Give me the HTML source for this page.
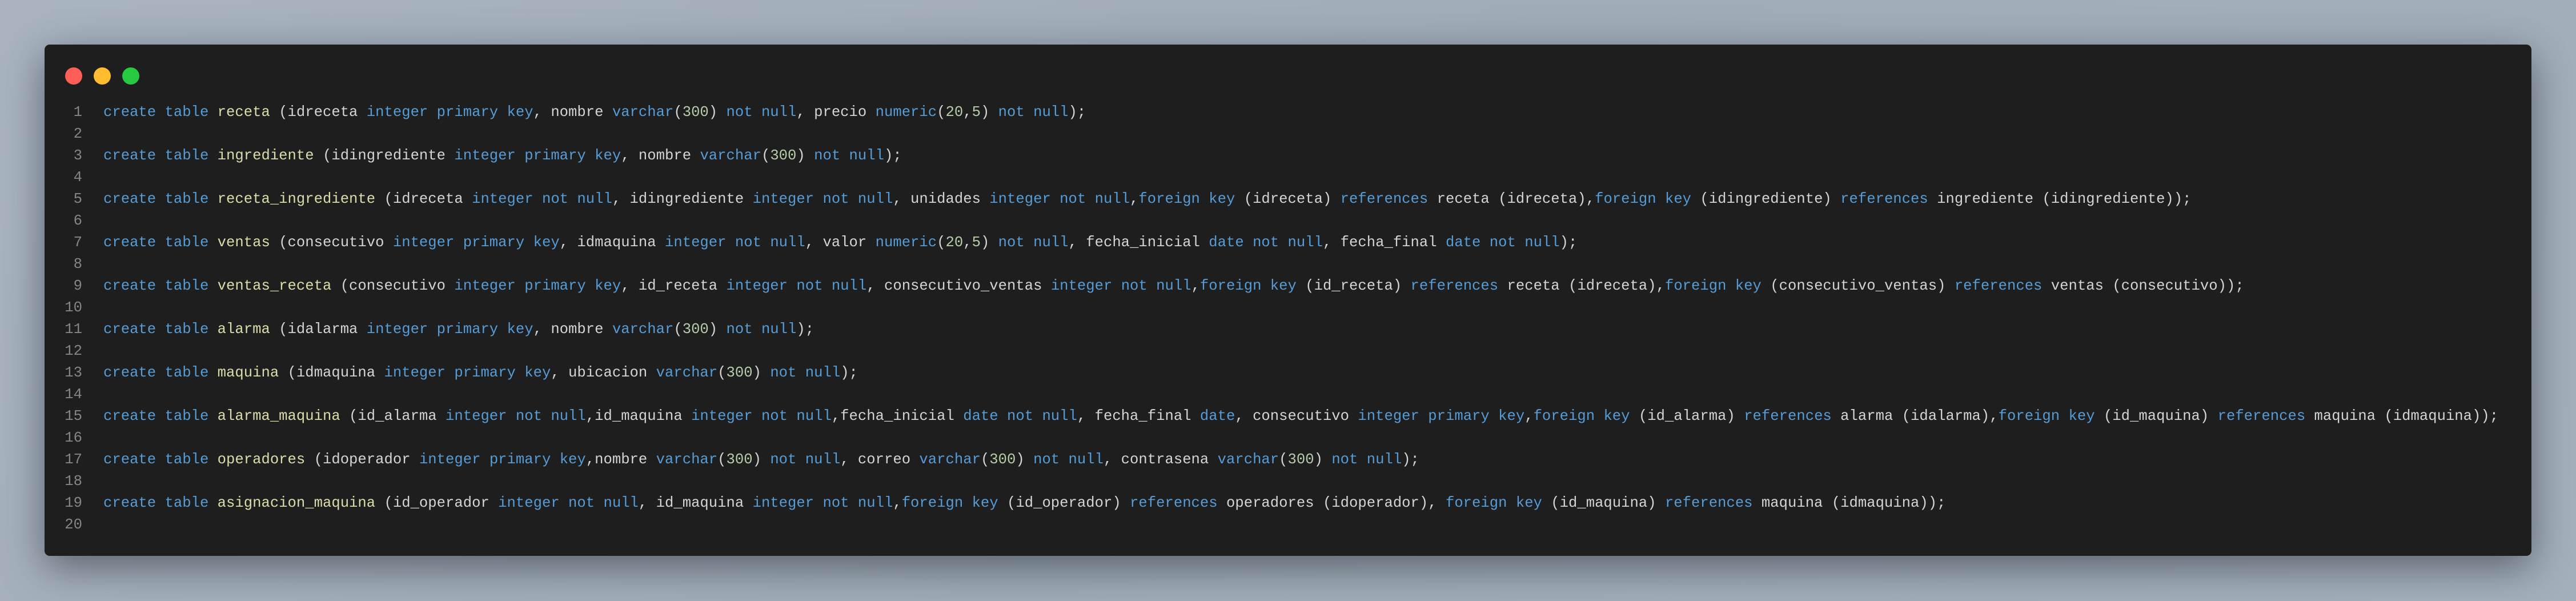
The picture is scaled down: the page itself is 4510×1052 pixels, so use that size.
<!DOCTYPE html>
<html><head><meta charset="utf-8"><style>
html,body{margin:0;padding:0}
body{width:4510px;height:1052px;overflow:hidden;background:linear-gradient(135deg,#a9b4c0 0%,#a0acb8 50%,#a4b0bc 100%);position:relative}
.win{position:absolute;left:78px;top:78px;width:4354px;height:895px;background:#1e1e1e;border-radius:9px;box-shadow:0 20px 70px rgba(40,48,58,0.6)}
.dot{position:absolute;top:118px;width:30px;height:30px;border-radius:50%}
.code{position:absolute;left:0;top:178px;width:4400px;height:760px;font-family:"Liberation Mono",monospace;font-size:25.6px;line-height:38px;color:#d4d4d4}
.ln{position:absolute;top:0;left:0;width:144px;text-align:right;color:#858585;white-space:pre}
.tx{position:absolute;top:0;left:181px;white-space:pre}
.k{color:#569cd6}.t{color:#dcdcaa}.n{color:#b5cea8}
</style></head><body>
<div class="win"></div>
<div class="dot" style="left:114px;background:#ff5f57"></div>
<div class="dot" style="left:164px;background:#febc2e"></div>
<div class="dot" style="left:214px;background:#28c840"></div>
<div class="code"><div class="ln">1
2
3
4
5
6
7
8
9
10
11
12
13
14
15
16
17
18
19
20</div><div class="tx"><span class="k">create</span> <span class="k">table</span> <span class="t">receta</span> (idreceta <span class="k">integer</span> <span class="k">primary</span> <span class="k">key</span>, nombre <span class="k">varchar</span>(<span class="n">300</span>) <span class="k">not</span> <span class="k">null</span>, precio <span class="k">numeric</span>(<span class="n">20</span>,<span class="n">5</span>) <span class="k">not</span> <span class="k">null</span>);

<span class="k">create</span> <span class="k">table</span> <span class="t">ingrediente</span> (idingrediente <span class="k">integer</span> <span class="k">primary</span> <span class="k">key</span>, nombre <span class="k">varchar</span>(<span class="n">300</span>) <span class="k">not</span> <span class="k">null</span>);

<span class="k">create</span> <span class="k">table</span> <span class="t">receta_ingrediente</span> (idreceta <span class="k">integer</span> <span class="k">not</span> <span class="k">null</span>, idingrediente <span class="k">integer</span> <span class="k">not</span> <span class="k">null</span>, unidades <span class="k">integer</span> <span class="k">not</span> <span class="k">null</span>,<span class="k">foreign</span> <span class="k">key</span> (idreceta) <span class="k">references</span> receta (idreceta),<span class="k">foreign</span> <span class="k">key</span> (idingrediente) <span class="k">references</span> ingrediente (idingrediente));

<span class="k">create</span> <span class="k">table</span> <span class="t">ventas</span> (consecutivo <span class="k">integer</span> <span class="k">primary</span> <span class="k">key</span>, idmaquina <span class="k">integer</span> <span class="k">not</span> <span class="k">null</span>, valor <span class="k">numeric</span>(<span class="n">20</span>,<span class="n">5</span>) <span class="k">not</span> <span class="k">null</span>, fecha_inicial <span class="k">date</span> <span class="k">not</span> <span class="k">null</span>, fecha_final <span class="k">date</span> <span class="k">not</span> <span class="k">null</span>);

<span class="k">create</span> <span class="k">table</span> <span class="t">ventas_receta</span> (consecutivo <span class="k">integer</span> <span class="k">primary</span> <span class="k">key</span>, id_receta <span class="k">integer</span> <span class="k">not</span> <span class="k">null</span>, consecutivo_ventas <span class="k">integer</span> <span class="k">not</span> <span class="k">null</span>,<span class="k">foreign</span> <span class="k">key</span> (id_receta) <span class="k">references</span> receta (idreceta),<span class="k">foreign</span> <span class="k">key</span> (consecutivo_ventas) <span class="k">references</span> ventas (consecutivo));

<span class="k">create</span> <span class="k">table</span> <span class="t">alarma</span> (idalarma <span class="k">integer</span> <span class="k">primary</span> <span class="k">key</span>, nombre <span class="k">varchar</span>(<span class="n">300</span>) <span class="k">not</span> <span class="k">null</span>);

<span class="k">create</span> <span class="k">table</span> <span class="t">maquina</span> (idmaquina <span class="k">integer</span> <span class="k">primary</span> <span class="k">key</span>, ubicacion <span class="k">varchar</span>(<span class="n">300</span>) <span class="k">not</span> <span class="k">null</span>);

<span class="k">create</span> <span class="k">table</span> <span class="t">alarma_maquina</span> (id_alarma <span class="k">integer</span> <span class="k">not</span> <span class="k">null</span>,id_maquina <span class="k">integer</span> <span class="k">not</span> <span class="k">null</span>,fecha_inicial <span class="k">date</span> <span class="k">not</span> <span class="k">null</span>, fecha_final <span class="k">date</span>, consecutivo <span class="k">integer</span> <span class="k">primary</span> <span class="k">key</span>,<span class="k">foreign</span> <span class="k">key</span> (id_alarma) <span class="k">references</span> alarma (idalarma),<span class="k">foreign</span> <span class="k">key</span> (id_maquina) <span class="k">references</span> maquina (idmaquina));

<span class="k">create</span> <span class="k">table</span> <span class="t">operadores</span> (idoperador <span class="k">integer</span> <span class="k">primary</span> <span class="k">key</span>,nombre <span class="k">varchar</span>(<span class="n">300</span>) <span class="k">not</span> <span class="k">null</span>, correo <span class="k">varchar</span>(<span class="n">300</span>) <span class="k">not</span> <span class="k">null</span>, contrasena <span class="k">varchar</span>(<span class="n">300</span>) <span class="k">not</span> <span class="k">null</span>);

<span class="k">create</span> <span class="k">table</span> <span class="t">asignacion_maquina</span> (id_operador <span class="k">integer</span> <span class="k">not</span> <span class="k">null</span>, id_maquina <span class="k">integer</span> <span class="k">not</span> <span class="k">null</span>,<span class="k">foreign</span> <span class="k">key</span> (id_operador) <span class="k">references</span> operadores (idoperador), <span class="k">foreign</span> <span class="k">key</span> (id_maquina) <span class="k">references</span> maquina (idmaquina));</div></div>
</body></html>
